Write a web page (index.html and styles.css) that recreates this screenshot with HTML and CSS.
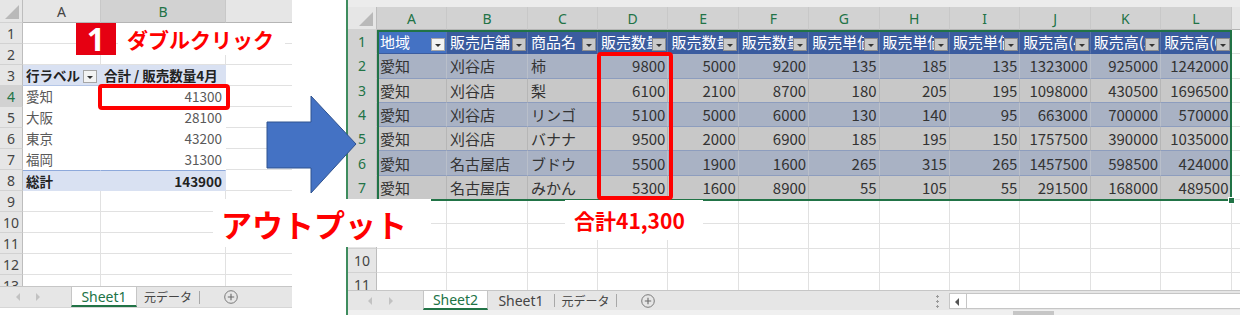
FILE: index.html
```html
<!DOCTYPE html>
<html lang="ja">
<head>
    <meta charset="UTF-8">
    <title>ピボットテーブル ダブルクリック</title>
    <link rel="stylesheet" href="styles.css">
</head>
<body>
<div class="stage">

    <section class="sheet sheet-left">
        <div class="grid grid-left">
            <div class="row hd"><div class="corner"></div><div>A</div><div class="sel">B</div><div></div></div>
            <div class="row"><div>1</div><div></div><div></div><div></div></div>
            <div class="row"><div>2</div><div></div><div></div><div></div></div>
            <div class="row"><div>3</div><div class="pv ph"><span class="t">行ラベル</span><span class="dd light"></span></div><div class="pv ph">合計 / 販売数量4月</div><div></div></div>
            <div class="row on"><div>4</div><div class="pv">愛知</div><div class="pv num">41300</div><div></div></div>
            <div class="row"><div>5</div><div class="pv">大阪</div><div class="pv num">28100</div><div></div></div>
            <div class="row"><div>6</div><div class="pv">東京</div><div class="pv num">43200</div><div></div></div>
            <div class="row"><div>7</div><div class="pv">福岡</div><div class="pv num">31300</div><div></div></div>
            <div class="row"><div>8</div><div class="pv pt">総計</div><div class="pv pt num">143900</div><div></div></div>
            <div class="row"><div>9</div><div></div><div></div><div></div></div>
            <div class="row"><div>10</div><div></div><div></div><div></div></div>
            <div class="row"><div>11</div><div></div><div></div><div></div></div>
            <div class="row"><div>12</div><div></div><div></div><div></div></div>
            <div class="row"><div>13</div><div></div><div></div><div></div></div>
        </div>
        <div class="tabbar">
            <div class="nav nav-left"><span class="tri l"></span><span class="tri r"></span></div>
            <div class="tab on tab-s1">Sheet1</div>
            <div class="tab jp tab-src">元データ</div>
            <span class="sep"></span>
            <div class="add">
                <svg width="14" height="14" viewBox="0 0 14 14"><circle cx="7" cy="7" r="6.3" fill="none" stroke="#7a7a7a" stroke-width="1"/><path d="M7 3.8v6.4M3.8 7h6.4" stroke="#6a6a6a" stroke-width="1.1"/></svg>
            </div>
        </div>
        <div class="foot-left"></div>
    </section>

    <section class="sheet sheet-right">
        <div class="topstrip"></div>
        <div class="grid grid-right">
            <div class="row hd">
                <div class="corner"></div>
                <div class="sel">A</div><div class="sel">B</div><div class="sel">C</div><div class="sel">D</div>
                <div class="sel">E</div><div class="sel">F</div><div class="sel">G</div><div class="sel">H</div>
                <div class="sel">I</div><div class="sel">J</div><div class="sel">K</div><div class="sel">L</div>
                <div></div>
            </div>
            <div class="row on">
                <div>1</div>
                <div class="th act"><span class="t">地域</span><span class="dd light"></span></div>
                <div class="th"><span class="t">販売店舗</span><span class="dd"></span></div>
                <div class="th"><span class="t">商品名</span><span class="dd"></span></div>
                <div class="th"><span class="t">販売数量4月</span><span class="dd"></span></div>
                <div class="th"><span class="t">販売数量5月</span><span class="dd"></span></div>
                <div class="th"><span class="t">販売数量6月</span><span class="dd"></span></div>
                <div class="th"><span class="t">販売単価4月</span><span class="dd"></span></div>
                <div class="th"><span class="t">販売単価5月</span><span class="dd"></span></div>
                <div class="th"><span class="t">販売単価6月</span><span class="dd"></span></div>
                <div class="th"><span class="t">販売高(4月)</span><span class="dd"></span></div>
                <div class="th"><span class="t">販売高(5月)</span><span class="dd"></span></div>
                <div class="th"><span class="t">販売高(6月)</span><span class="dd"></span></div>
                <div></div>
            </div>
            <div class="row on data band1">
                <div>2</div><div>愛知</div><div>刈谷店</div><div>柿</div>
                <div>9800</div><div>5000</div><div>9200</div><div>135</div><div>185</div><div>135</div>
                <div>1323000</div><div>925000</div><div>1242000</div><div></div>
            </div>
            <div class="row on data band2">
                <div>3</div><div>愛知</div><div>刈谷店</div><div>梨</div>
                <div>6100</div><div>2100</div><div>8700</div><div>180</div><div>205</div><div>195</div>
                <div>1098000</div><div>430500</div><div>1696500</div><div></div>
            </div>
            <div class="row on data band1">
                <div>4</div><div>愛知</div><div>刈谷店</div><div>リンゴ</div>
                <div>5100</div><div>5000</div><div>6000</div><div>130</div><div>140</div><div>95</div>
                <div>663000</div><div>700000</div><div>570000</div><div></div>
            </div>
            <div class="row on data band2">
                <div>5</div><div>愛知</div><div>刈谷店</div><div>バナナ</div>
                <div>9500</div><div>2000</div><div>6900</div><div>185</div><div>195</div><div>150</div>
                <div>1757500</div><div>390000</div><div>1035000</div><div></div>
            </div>
            <div class="row on data band1">
                <div>6</div><div>愛知</div><div>名古屋店</div><div>ブドウ</div>
                <div>5500</div><div>1900</div><div>1600</div><div>265</div><div>315</div><div>265</div>
                <div>1457500</div><div>598500</div><div>424000</div><div></div>
            </div>
            <div class="row on data band2">
                <div>7</div><div>愛知</div><div>名古屋店</div><div>みかん</div>
                <div>5300</div><div>1600</div><div>8900</div><div>55</div><div>105</div><div>55</div>
                <div>291500</div><div>168000</div><div>489500</div><div></div>
            </div>
            <div class="row"><div>8</div><div></div><div></div><div></div><div></div><div></div><div></div><div></div><div></div><div></div><div></div><div></div><div></div><div></div></div>
            <div class="row"><div>9</div><div></div><div></div><div></div><div></div><div></div><div></div><div></div><div></div><div></div><div></div><div></div><div></div><div></div></div>
            <div class="row"><div>10</div><div></div><div></div><div></div><div></div><div></div><div></div><div></div><div></div><div></div><div></div><div></div><div></div><div></div></div>
            <div class="row"><div>11</div><div></div><div></div><div></div><div></div><div></div><div></div><div></div><div></div><div></div><div></div><div></div><div></div><div></div></div>
        </div>
        <div class="tabbar tabbar-right">
            <div class="nav nav-right"><span class="tri l"></span><span class="tri r"></span></div>
            <div class="tab on tab-s2">Sheet2</div>
            <div class="tab tab-s1r">Sheet1</div>
            <span class="sep"></span>
            <div class="tab jp tab-srcr">元データ</div>
            <span class="sep"></span>
            <div class="add">
                <svg width="14" height="14" viewBox="0 0 14 14"><circle cx="7" cy="7" r="6.3" fill="none" stroke="#7a7a7a" stroke-width="1"/><path d="M7 3.8v6.4M3.8 7h6.4" stroke="#6a6a6a" stroke-width="1.1"/></svg>
            </div>
            <span class="grip"></span>
            <div class="hscroll"><span class="hbtn"></span></div>
        </div>
        <div class="foot-right"></div>
        <div class="selbox"></div>
    </section>

    <div class="badge">1</div>
    <div class="callout">ダブルクリック</div>
    <div class="frame frame-pivot"></div>
    <div class="frame frame-detail"></div>
    <svg class="arrow" width="100" height="110" viewBox="0 0 100 110">
        <polygon points="7,32 51,32 51,6 96,54 51,103 51,78 7,78" fill="#4472c4" stroke="#2f528f" stroke-width="1"/>
    </svg>
    <div class="caption caption-output">アウトプット</div>
    <div class="caption caption-sum">合計41,300</div>

</div>
</body>
</html>
```

FILE: styles.css
```css
body {
    margin: 0;
    background-color: #fff;
    font-family: "Noto Sans CJK JP", "Noto Sans", sans-serif;
}
.stage {
    position: relative;
    width: 1240px;
    height: 315px;
    display: flex;
    justify-content: space-between;
    overflow: hidden;
}
.sheet {
    display: flex;
    flex-direction: column;
    box-sizing: border-box;
}
.sheet-left {
    width: 292px;
}
.sheet-right {
    position: relative;
    width: 894px;
    border-left: 2px solid #3e8c5e;
}

/* grid */
.grid {
    display: grid;
    overflow: hidden;
    color: #333;
}
.grid-left {
    height: 286px;
    grid-template-columns: 23px 78px 125px 130px;
    grid-template-rows: 23px;
    grid-auto-rows: 21px;
    font-size: 13.5px;
}
.grid-right {
    height: 283px;
    grid-template-columns: 29px 70px 81px 70px repeat(9, 70.4px) 40px;
    grid-template-rows: 23px;
    grid-auto-rows: 24.3px;
    font-size: 15px;
}
.grid .row {
    display: contents;
}
.grid .row > div {
    box-sizing: border-box;
    display: flex;
    align-items: center;
    min-width: 0;
    padding: 0 3px;
    overflow: hidden;
    white-space: nowrap;
    border-right: 1px solid #e1e1e1;
    border-bottom: 1px solid #e1e1e1;
}
.grid .row > div:first-child {
    justify-content: center;
    padding: 0;
    background-color: #e6e6e6;
    color: #444;
    font-family: "Noto Sans", sans-serif;
    font-size: 14px;
    border-right-color: #bdbdbd;
    border-bottom-color: #d2d2d2;
}
.grid .hd > div {
    justify-content: center;
    background-color: #e6e6e6;
    color: #444;
    font-family: "Noto Sans", sans-serif;
    font-size: 14px;
    border-right-color: #c8c8c8;
    border-bottom-color: #b5b5b5;
}
.grid .hd > .sel {
    background-color: #d2d2d2;
    color: #217346;
}
.grid .row.on > div:first-child {
    background-color: #d2d2d2;
    color: #217346;
}
.corner {
    position: relative;
}
.corner::after {
    content: "";
    position: absolute;
    right: 3px;
    bottom: 3px;
    border-style: solid;
    border-width: 0 0 14px 14px;
    border-color: transparent transparent #b9b9b9 transparent;
}

/* pivot table */
.grid .row > .pv {
    border-color: transparent;
    color: #595959;
}
.grid .row > .ph {
    background-color: #d9e1f2;
    color: #222;
    font-weight: bold;
    border-bottom: 1px solid #b4c6e7;
    padding-right: 3px;
}
.grid .row > .pt {
    background-color: #d9e1f2;
    color: #222;
    font-weight: bold;
    border-top: 1px solid #8ea9db;
}
.grid .row > .num {
    justify-content: flex-end;
}
.t {
    flex: 1 1 auto;
    min-width: 0;
    overflow: hidden;
}
.dd {
    position: relative;
    flex: none;
    width: 14px;
    height: 13px;
    align-self: flex-end;
    margin-bottom: 2px;
    box-sizing: border-box;
    background-color: #c9c9c9;
    border: 1px solid #8d8d8d;
}
.dd.light {
    background-color: #f3f3f3;
    border-color: #a6a6a6;
}
.dd::after {
    content: "";
    position: absolute;
    left: 3px;
    top: 5px;
    border-left: 3px solid transparent;
    border-right: 3px solid transparent;
    border-top: 3px solid #333;
}

/* table on Sheet2 */
.grid .row > .th {
    background-color: #3b5c9f;
    color: #fff;
    padding: 0 1px 0 3px;
    border-right-color: #5a74ab;
    border-bottom-color: #3b5c9f;
}
.grid .row > .th.act {
    background-color: #4472c4;
}
.grid .band1 > div {
    background-color: #a9b2c4;
    border-right-color: #b9bfca;
    border-bottom-color: #8d9dbe;
}
.grid .band2 > div {
    background-color: #c8c8c8;
    border-right-color: #b6b6b6;
    border-bottom-color: #8d9dbe;
}
.grid .data > div:nth-child(n+5) {
    justify-content: flex-end;
    padding-right: 2px;
}
.grid .data > div:last-child,
.grid .row.on > div:last-child {
    background-color: #fff;
    border-right-color: #e1e1e1;
    border-bottom-color: #e1e1e1;
}
.selbox {
    position: absolute;
    left: 29px;
    top: 30px;
    width: 855px;
    height: 171px;
    box-sizing: border-box;
    border: 2px solid #217346;
}
.selbox::after {
    content: "";
    position: absolute;
    right: -5px;
    bottom: -5px;
    width: 5px;
    height: 5px;
    background-color: #217346;
    border: 1px solid #fff;
}

/* sheet tabs */
.topstrip {
    height: 7px;
    background-color: #ececec;
}
.tabbar {
    display: flex;
    align-items: stretch;
    height: 21px;
    box-sizing: border-box;
    background-color: #e6e6e6;
    border-top: 1px solid #c6c6c6;
    font-family: "Noto Sans", "Noto Sans CJK JP", sans-serif;
    font-size: 14px;
    color: #444;
}
.tabbar-right {
    height: 20px;
}
.nav {
    display: flex;
    align-items: center;
    box-sizing: border-box;
}
.nav-left {
    width: 71px;
    padding-left: 16px;
    gap: 16px;
}
.nav-right {
    width: 75px;
    padding-left: 20px;
    gap: 17px;
}
.tri {
    width: 0;
    height: 0;
    border-top: 4px solid transparent;
    border-bottom: 4px solid transparent;
}
.tri.l {
    border-right: 4px solid #c2c2c2;
}
.tri.r {
    border-left: 4px solid #c2c2c2;
}
.tab {
    display: flex;
    align-items: center;
    justify-content: center;
    box-sizing: border-box;
}
.tab.jp {
    font-size: 12px;
}
.tab.on {
    background-color: #fff;
    color: #217346;
    border-left: 1px solid #c6c6c6;
    border-right: 1px solid #c6c6c6;
    border-bottom: 2px solid #217346;
}
.tab-s1 { width: 66px; }
.tab-src { width: 62px; }
.tab-s2 { width: 65px; }
.tab-s1r { width: 66px; }
.tab-srcr { width: 61px; }
.sep {
    width: 1px;
    height: 13px;
    align-self: center;
    background-color: #a8a8a8;
}
.add {
    display: flex;
    align-items: center;
    margin-left: 24px;
}
.grip {
    width: 3px;
    height: 14px;
    margin-left: auto;
    margin-right: 10px;
    align-self: center;
    background: radial-gradient(circle, #9a9a9a 1px, transparent 1.4px) center top / 3px 5px repeat-y;
}
.hscroll {
    width: 291px;
    margin: 2px 0 1px;
    box-sizing: border-box;
    display: flex;
    background-color: #fff;
    border: 1px solid #c6c6c6;
    border-right: none;
}
.hbtn {
    position: relative;
    width: 16px;
    border-right: 1px solid #c6c6c6;
}
.hbtn::after {
    content: "";
    position: absolute;
    left: 5px;
    top: 4px;
    border-top: 4px solid transparent;
    border-bottom: 4px solid transparent;
    border-right: 4px solid #555;
}
.foot-left {
    height: 8px;
    border-top: 1px solid #d6d6d6;
    box-sizing: border-box;
}
.foot-right {
    height: 5px;
    background: linear-gradient(#c6c6c6, #c6c6c6) no-repeat 665px 1px / 41px 4px, #f0f0f0;
}

/* callouts */
.badge {
    position: absolute;
    left: 76px;
    top: 23px;
    width: 40px;
    height: 32px;
    background-color: #e60012;
    color: #fff;
    font-family: "Noto Sans", sans-serif;
    font-weight: bold;
    font-size: 32px;
    line-height: 32px;
    text-align: center;
}
.callout {
    position: absolute;
    left: 118px;
    top: 23px;
    width: 167px;
    height: 32px;
    padding-left: 9px;
    box-sizing: border-box;
    background-color: #fff;
    color: #f00;
    font-weight: bold;
    font-size: 21px;
    line-height: 32px;
}
.frame {
    position: absolute;
    box-sizing: border-box;
    border: 4px solid #f00;
    border-radius: 4px;
}
.frame-pivot {
    left: 98px;
    top: 84px;
    width: 132px;
    height: 26px;
}
.frame-detail {
    left: 597px;
    top: 52px;
    width: 76px;
    height: 148px;
}
.arrow {
    position: absolute;
    left: 260px;
    top: 90px;
}
.caption {
    position: absolute;
    display: flex;
    align-items: center;
    box-sizing: border-box;
    background-color: #fff;
    color: #f00;
    font-weight: bold;
}
.caption-output {
    left: 213px;
    top: 199px;
    width: 218px;
    height: 48px;
    padding-left: 8px;
    font-size: 31px;
}
.caption-sum {
    left: 565px;
    top: 200px;
    width: 138px;
    height: 40px;
    padding-left: 9px;
    font-size: 21px;
}
```
